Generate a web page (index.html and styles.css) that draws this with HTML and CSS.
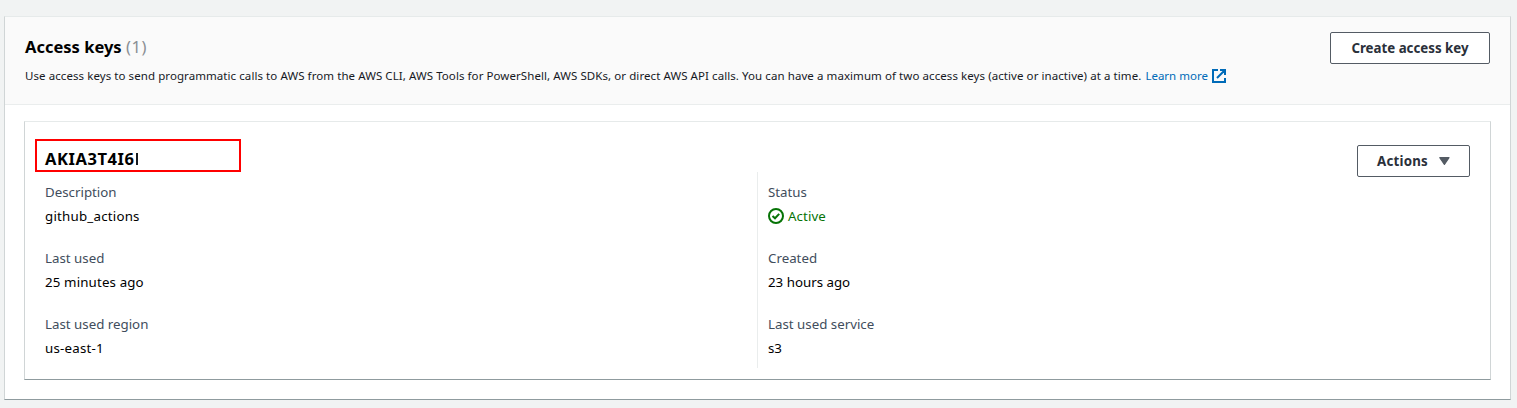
FILE: index.html
```html
<!DOCTYPE html>
<html lang="en">
<head>
<meta charset="utf-8">
<title>Access keys</title>
<link rel="stylesheet" href="styles.css">
</head>
<body>
<section class="panel">
  <header class="panel-header">
    <div class="heading">
      <h2 class="title">Access keys <span class="count">(1)</span></h2>
      <p class="summary"><span class="summary-text">Use access keys to send programmatic calls to AWS from the AWS CLI, AWS Tools for PowerShell, AWS SDKs, or direct AWS API calls. You can have a maximum of two access keys (active or inactive) at a time.</span><a class="link"><span>Learn more</span><svg class="external" viewBox="0 0 14 14" width="14" height="14"><path d="M6 1H1v12h12V9M8 1h5v5M13 1L5 9" fill="none" stroke="#006bb8" stroke-width="2"/></svg></a></p>
    </div>
    <button class="button create">Create access key</button>
  </header>
  <div class="panel-body">
    <article class="key-card">
      <div class="key-header">
        <h3 class="key-id"><span>AKIA3T4I6</span><span class="caret"></span></h3>
        <button class="button actions"><span>Actions</span><svg width="11" height="8" viewBox="0 0 11 8"><path d="M0.8 0.7h9.2L5.4 7.4z" fill="#545b64" stroke="#545b64" stroke-width="1.2" stroke-linejoin="round"/></svg></button>
      </div>
      <div class="columns">
        <dl class="column">
          <div class="field"><dt>Description</dt><dd class="wide">github_actions</dd></div>
          <div class="field"><dt>Last used</dt><dd class="roomy">25 minutes ago</dd></div>
          <div class="field"><dt>Last used region</dt><dd class="wide">us-east-1</dd></div>
        </dl>
        <dl class="column second">
          <div class="field"><dt>Status</dt><dd class="active"><svg width="16" height="16" viewBox="0 0 16 16" fill="none" stroke="#067306" stroke-width="2"><circle cx="8" cy="8" r="7"/><path d="M4.5 8l2.5 2.3 4.2-4.4"/></svg><span>Active</span></dd></div>
          <div class="field"><dt>Created</dt><dd>23 hours ago</dd></div>
          <div class="field"><dt>Last used service</dt><dd>s3</dd></div>
        </dl>
      </div>
    </article>
  </div>
</section>
</body>
</html>
```
FILE: styles.css
```css
* { box-sizing: border-box; }
body {
  margin: 0;
  padding: 16px 6px 0 4px;
  background: #f1f3f3;
  font-family: "Noto Sans", sans-serif;
  font-size: 13.3px;
  line-height: 22px;
  color: #16191f;
}
h2, h3, p, dl, dd { margin: 0; }
.panel, .key-card {
  border: 1px solid #d0d5d6;
  border-top-color: #e6eaea;
  border-bottom-color: #8f9b9e;
}
.panel {
  height: 384px;
  background: #fff;
  box-shadow: 0 1px 0 #dfe3e3;
}
.panel-header {
  display: flex;
  justify-content: space-between;
  align-items: flex-start;
  height: 88px;
  padding: 15px 20px 0;
  background: #fafafa;
  border-bottom: 1px solid #eaeded;
}
.title { color: #000; font-size: 16.5px; line-height: 30px; font-weight: 700; white-space: nowrap; letter-spacing: 0; }
.count { color: #8a8f94; font-weight: 400; letter-spacing: .6px; }
.summary { display: flex; margin-top: 3px; font-size: 11.5px; line-height: 22px; white-space: nowrap; }
.summary-text { letter-spacing: .073px; }
.link { display: flex; align-items: center; margin-left: 4px; color: #006bb8; }
.external { margin-left: 4px; }
.button {
  display: flex;
  align-items: center;
  justify-content: center;
  height: 32px;
  padding: 0;
  border: 1px solid #545b64;
  border-radius: 2px;
  background: #fff;
  color: #2a303a;
  font: 700 13.3px/20px "Noto Sans", sans-serif;
}
.create { width: 160px; }
.actions { width: 113px; gap: 11px; margin-top: 6px; letter-spacing: .2px; }
.panel-body { padding: 16px 19px 0; }
.key-card {
  height: 259px;
  padding: 17px 20px 0 10px;
}
.key-header { display: flex; justify-content: space-between; height: 33px; }
.key-id {
  display: flex;
  align-items: center;
  width: 206px;
  height: 33px;
  padding: 7px 8px 0;
  border: 2px solid #f00;
  color: #000;
  font-size: 16.5px;
  letter-spacing: .55px;
}
.caret { width: 1.5px; height: 12px; margin-left: 2px; background: #16191f; }
.columns { display: grid; grid-template-columns: 722px 1fr; height: 196px; }
.column { padding: 9px 0 0 10px; }
.second { border-left: 1px solid #eaeded; }
.field { height: 66px; white-space: nowrap; }
.field:last-child { height: 55px; }
.field dt { height: 22px; color: #414d5c; }
.field dd { height: 22px; margin-top: 2px; color: #000; }
.field .wide { letter-spacing: .22px; }
.field .roomy { letter-spacing: .14px; }
.field .active { display: flex; align-items: center; gap: 4px; color: #067306; letter-spacing: .1px; }
```
